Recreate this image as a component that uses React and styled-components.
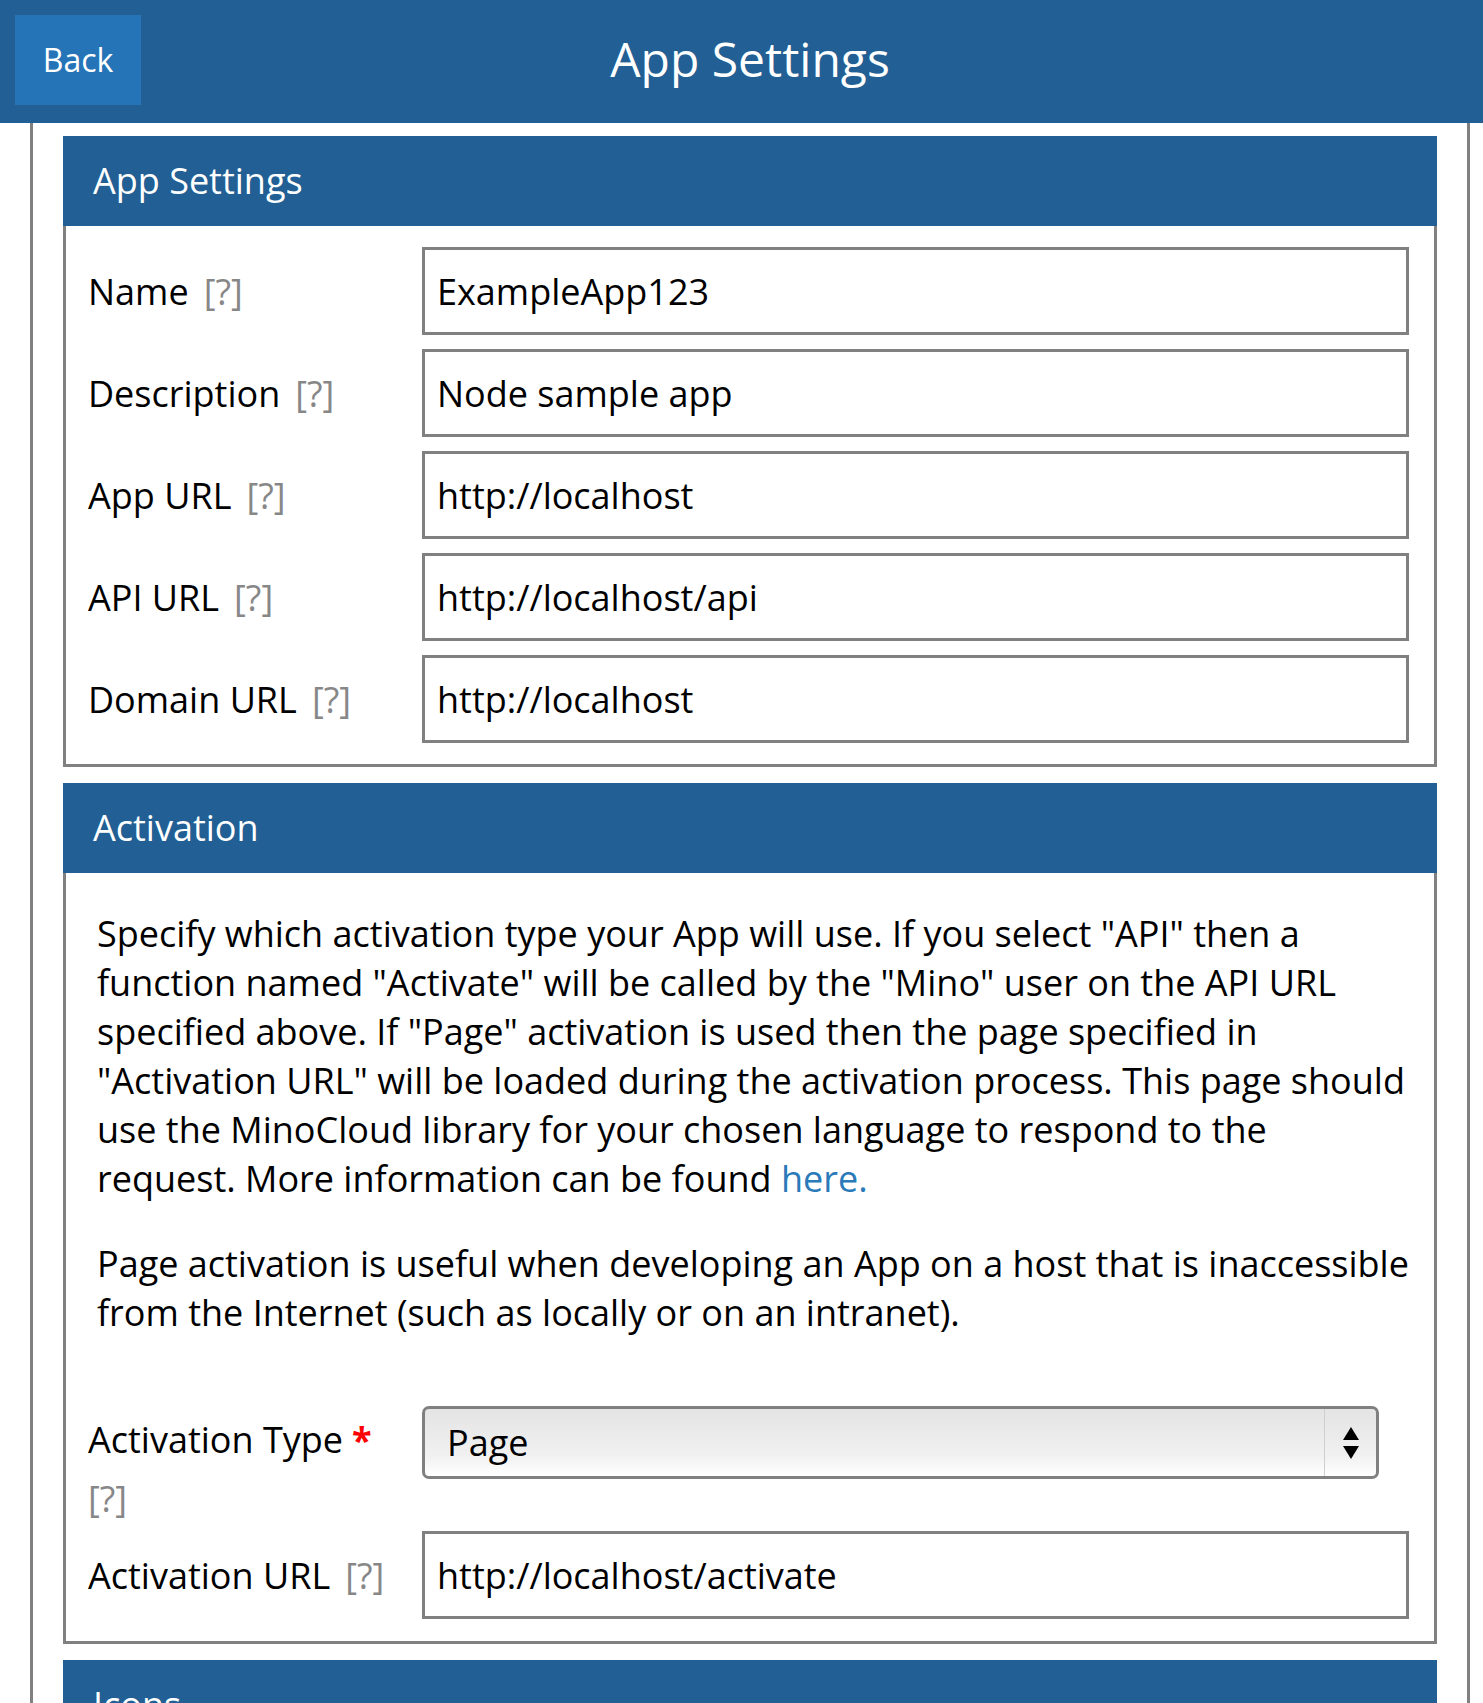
import React from "react";
import styled, { createGlobalStyle } from "styled-components";

const GlobalStyle = createGlobalStyle`
  html, body {
    margin: 0;
    padding: 0;
    overflow: hidden;
    background: #ffffff;
  }
  body {
    font-family: "Open Sans", "Noto Sans", sans-serif;
    color: #000;
  }
  * { box-sizing: border-box; }
`;

const Screen = styled.div`
  height: 100vh;
  overflow: hidden;
  display: flex;
  flex-direction: column;
`;

const TopBar = styled.header`
  flex: none;
  height: 123px;
  background: #215f94;
  display: grid;
  grid-template-columns: 156px 1fr 139px;
  align-items: start;
`;

const BackButton = styled.button`
  margin: 15px 0 0 15px;
  width: 126px;
  height: 90px;
  border: none;
  border-radius: 0;
  background: #2574b7;
  color: #fff;
  font-family: "Open Sans", sans-serif;
  font-size: 32px;
  line-height: 90px;
  padding: 0;
  cursor: pointer;
`;

const Title = styled.h1`
  margin: 0;
  padding-top: 26px;
  text-align: center;
  color: #fff;
  font-size: 48px;
  font-weight: 400;
  line-height: 65px;
`;

const Content = styled.main`
  flex: 1;
  margin: 0 13px 0 30px;
  border-left: 3px solid #808080;
  border-right: 3px solid #808080;
  padding: 13px 30px 0 30px;
  display: flex;
  flex-direction: column;
  gap: 16px;
`;

const Panel = styled.section`
  display: flex;
  flex-direction: column;
`;

const PanelHeader = styled.h2`
  margin: 0;
  height: 90px;
  background: #215f94;
  color: #fff;
  font-size: 36px;
  font-weight: 400;
  line-height: 90px;
  padding-left: 30px;
`;

const PanelBody = styled.div`
  border: 3px solid #808080;
  border-top: none;
`;

const Form = styled.div`
  display: flex;
  flex-direction: column;
  gap: ${(p) => p.$gap}px;
  padding: ${(p) => p.$pt}px 25px ${(p) => p.$pb}px 22px;
`;

const Row = styled.div`
  display: grid;
  grid-template-columns: 334px 1fr;
  align-items: ${(p) => (p.$top ? "start" : "center")};
`;

const Label = styled.label`
  font-size: 36px;
  line-height: ${(p) => (p.$tall ? "59px" : "49px")};
  padding-top: ${(p) => (p.$tall ? "4px" : "0")};
  padding-right: 20px;
  color: #000;
`;

const Help = styled.span`
  color: #878787;
  margin-left: ${(p) => (p.$wrapped ? "0" : "15px")};
  display: ${(p) => (p.$wrapped ? "block" : "inline")};
`;

const Required = styled.span`
  color: #ff0000;
  font-weight: 700;
  margin-left: 9px;
`;

const TextInput = styled.input`
  width: 100%;
  height: 88px;
  border: 3px solid #808080;
  border-radius: 0;
  padding: 0 12px;
  font-family: "Open Sans", sans-serif;
  font-size: 36px;
  color: #000;
  background: #fff;
  outline: none;
`;

const SelectBox = styled.div`
  width: calc(100% - 30px);
  height: 73px;
  border: 3px solid #808080;
  border-radius: 7px;
  background: linear-gradient(#e4e4e4, #f1f1f1 70%, #ffffff);
  display: flex;
  align-items: stretch;
  overflow: hidden;
`;

const SelectValue = styled.div`
  flex: 1;
  padding-left: 22px;
  font-size: 36px;
  line-height: 67px;
  color: #000;
`;

const SelectArrow = styled.div`
  width: 52px;
  border-left: 1px solid #cfcfcf;
  display: flex;
  align-items: center;
  justify-content: center;
`;

const TextBlock = styled.div`
  padding: 0 23px 0 31px;
`;

const Para = styled.p`
  margin: 36px 0;
  font-size: 36px;
  line-height: 49px;
  color: #000;
`;

const Link = styled.a`
  color: #2a7ab9;
  text-decoration: none;
`;

const fields = [
  { label: "Name", value: "ExampleApp123" },
  { label: "Description", value: "Node sample app" },
  { label: "App URL", value: "http://localhost" },
  { label: "API URL", value: "http://localhost/api" },
  { label: "Domain URL", value: "http://localhost" },
];

function Field({ label, value }) {
  return (
    <Row>
      <Label>
        {label}
        <Help>[?]</Help>
      </Label>
      <TextInput type="text" value={value} readOnly />
    </Row>
  );
}

export default function App() {
  return (
    <Screen>
      <GlobalStyle />
      <TopBar>
        <BackButton type="button">Back</BackButton>
        <Title>App Settings</Title>
        <span />
      </TopBar>
      <Content>
        <Panel>
          <PanelHeader>App Settings</PanelHeader>
          <PanelBody>
            <Form $gap={14} $pt={21} $pb={21}>
              {fields.map((f) => (
                <Field key={f.label} label={f.label} value={f.value} />
              ))}
            </Form>
          </PanelBody>
        </Panel>

        <Panel>
          <PanelHeader>Activation</PanelHeader>
          <PanelBody>
            <TextBlock>
              <Para>
                Specify which activation type your App will use. If you select "API" then a
                function named "Activate" will be called by the "Mino" user on the API URL
                specified above. If "Page" activation is used then the page specified in
                "Activation URL" will be loaded during the activation process. This page should
                use the MinoCloud library for your chosen language to respond to the request.
                More information can be found <Link href="#">here.</Link>
              </Para>
              <Para>
                Page activation is useful when developing an App on a host that is inaccessible
                from the Internet (such as locally or on an intranet).
              </Para>
            </TextBlock>
            <Form $gap={3} $pt={33} $pb={22}>
              <Row $top>
                <Label $tall>
                  Activation Type<Required>*</Required>
                  <Help $wrapped>[?]</Help>
                </Label>
                <SelectBox>
                  <SelectValue>Page</SelectValue>
                  <SelectArrow>
                    <svg width="16" height="32" viewBox="0 0 16 32">
                      <polygon points="8,0 16,13 0,13" fill="#000" />
                      <polygon points="0,19 16,19 8,32" fill="#000" />
                    </svg>
                  </SelectArrow>
                </SelectBox>
              </Row>
              <Field label="Activation URL" value="http://localhost/activate" />
            </Form>
          </PanelBody>
        </Panel>

        <Panel>
          <PanelHeader>Icons</PanelHeader>
          <PanelBody>
            <Form $gap={14} $pt={21} $pb={21}>
              <Field label="Icon URL" value="http://localhost/icon.png" />
            </Form>
          </PanelBody>
        </Panel>
      </Content>
    </Screen>
  );
}
